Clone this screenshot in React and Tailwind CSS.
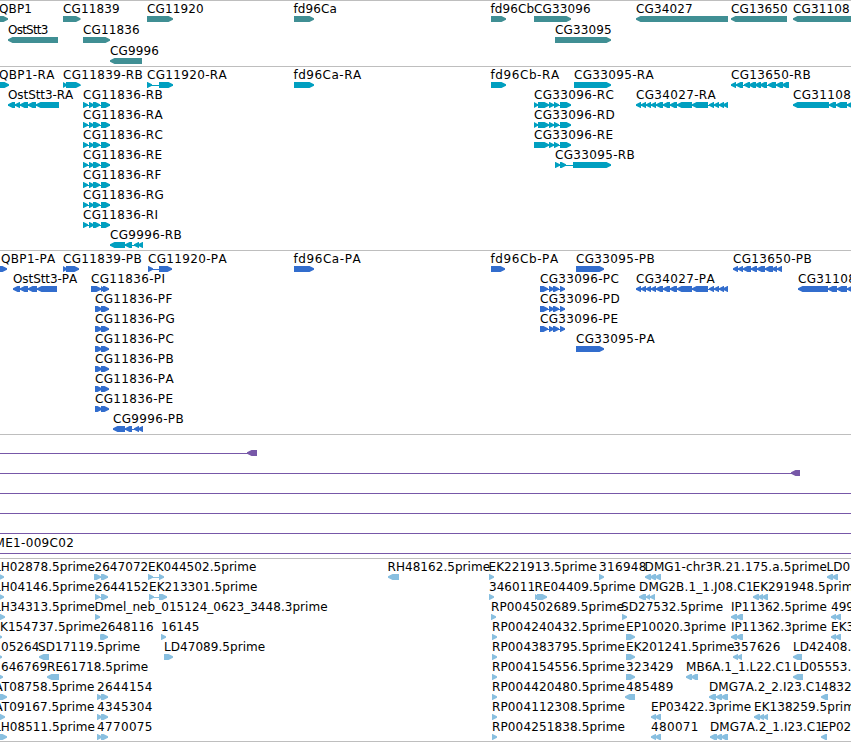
import React from 'react';

const WIDTH = 851;
const BAR_TOP = 16;
const BAR_HEIGHT = 6;
const MIDDLE = BAR_TOP + BAR_HEIGHT / 2;

// feature: [row, label, label x, strand, exons, label width (optional)]
const genes = [
  [0, 'QBP1', -1, 1, [[-12, 8]]],
  [0, 'CG11839', 63, 1, [[63, 80.5]]],
  [0, 'CG11920', 147, 1, [[147, 173]]],
  [0, 'fd96Ca', 293.5, 1, [[294, 314]], 43.5],
  [0, 'fd96Cb', 490.5, 1, [[491, 506]]],
  [0, 'CG33096', 534, 1, [[534, 571]]],
  [0, 'CG34027', 636, -1, [[636, 728]]],
  [0, 'CG13650', 731, -1, [[731, 787]]],
  [0, 'CG31108', 793, -1, [[793, 860]]],
  [1, 'OstStt3', 8, -1, [[8, 58]], 40.5],
  [1, 'CG11836', 83, 1, [[83, 110]]],
  [1, 'CG33095', 555, 1, [[555, 611]]],
  [2, 'CG9996', 110, -1, [[110, 142]]],
];

const cg11836R = [[83, 88], [89, 94], [93, 100], [101, 110]];
const cg33096R = [[534, 538], [538, 549], [549, 554], [554, 559], [560, 571]];
const cg34027 = [
  [636, 641], [641, 646], [646, 651], [651, 656], [656, 663], [663, 670], [670, 677],
  [677, 692], [692, 708], [709, 714], [714, 719], [719, 724], [723, 728],
];

const transcripts = [
  [0, 'QBP1-RA', -1, 1, [[-12, 9]]],
  [0, 'CG11839-RB', 63, 1, [[63, 67], [66, 80.5]]],
  [0, 'CG11920-RA', 147, 1, [[147, 152], [159, 173]]],
  [0, 'fd96Ca-RA', 293.5, 1, [[294, 314]], 68],
  [0, 'fd96Cb-RA', 490.5, 1, [[491, 506]], 69],
  [0, 'CG33095-RA', 574, 1, [[574, 611]]],
  [0, 'CG13650-RB', 731, -1, [[731, 736], [736, 743], [744, 750], [749, 756], [755, 761], [760, 767], [768, 776], [776, 783], [782, 789]]],
  [1, 'OstStt3-RA', 8, -1, [[8, 15], [15, 20], [20, 28], [28, 36], [36, 59]], 65.5],
  [1, 'CG11836-RB', 83, 1, cg11836R],
  [1, 'CG33096-RC', 534, 1, cg33096R],
  [1, 'CG34027-RA', 636, -1, cg34027],
  [1, 'CG31108', 793, -1, [[793, 829], [829, 836], [836, 847], [847, 860]]],
  [2, 'CG11836-RA', 83, 1, cg11836R],
  [2, 'CG33096-RD', 534, 1, cg33096R],
  [3, 'CG11836-RC', 83, 1, cg11836R],
  [3, 'CG33096-RE', 534, 1, [[534, 549], [549, 554], [554, 559], [560, 571]]],
  [4, 'CG11836-RE', 83, 1, cg11836R],
  [4, 'CG33095-RB', 555, 1, [[555, 560], [560, 566], [573, 611]]],
  [5, 'CG11836-RF', 83, 1, cg11836R],
  [6, 'CG11836-RG', 83, 1, cg11836R],
  [7, 'CG11836-RI', 83, 1, cg11836R],
  [8, 'CG9996-RB', 110, -1, [[110, 125], [125, 132], [134, 139], [138, 143]]],
];

const cg11836P = [[95, 102], [101, 109]];
const cg33096P = [[540, 548], [549, 554], [553, 559], [560, 565]];

const proteins = [
  [0, 'QBP1-PA', 1, 1, [[-12, 7]]],
  [0, 'CG11839-PB', 63, 1, [[63, 67], [66, 79]]],
  [0, 'CG11920-PA', 148, 1, [[148, 153], [159, 172]]],
  [0, 'fd96Ca-PA', 293.5, 1, [[294, 314]], 67.5],
  [0, 'fd96Cb-PA', 490.5, 1, [[491, 505]], 68],
  [0, 'CG33095-PB', 576, 1, [[576, 604]]],
  [0, 'CG13650-PB', 733, -1, [[733, 738], [738, 743], [743, 751], [751, 757], [757, 765], [765, 773], [772, 777], [777, 782]]],
  [1, 'OstStt3-PA', 13, -1, [[13, 20], [20, 28], [28, 37], [37, 57]], 64.5],
  [1, 'CG11836-PI', 91, 1, [[91, 101], [101, 105], [103, 109]]],
  [1, 'CG33096-PC', 540, 1, cg33096P],
  [1, 'CG34027-PA', 636, -1, cg34027],
  [1, 'CG31108', 798, -1, [[798, 828], [828, 837], [837, 847], [847, 860]]],
  [2, 'CG11836-PF', 95, 1, cg11836P],
  [2, 'CG33096-PD', 540, 1, cg33096P],
  [3, 'CG11836-PG', 95, 1, cg11836P],
  [3, 'CG33096-PE', 540, 1, cg33096P],
  [4, 'CG11836-PC', 95, 1, cg11836P],
  [4, 'CG33095-PA', 576, 1, [[576, 604]]],
  [5, 'CG11836-PB', 95, 1, cg11836P],
  [6, 'CG11836-PA', 95, 1, cg11836P],
  [7, 'CG11836-PE', 95, 1, cg11836P],
  [8, 'CG9996-PB', 113, -1, [[113, 125], [125, 132], [134, 139], [138, 143]]],
];

const clones = [
  [0, '', 0, -1, [[-20, -10], [247, 257]]],
  [1, '', 0, -1, [[-20, -10], [791, 800]]],
  [2, '', 0, -1, [[-20, -10], [860, 870]]],
  [3, '', 0, -1, [[-20, -10], [860, 870]]],
  [4, '', 0, -1, [[-20, -10], [860, 870]]],
  [5, 'ME1-009C02', -5.5, -1, [[-20, -10], [860, 870]], 79.5],
];

const ests = [
  [0, 'LH02878.5prime', -6, 1, [[-10, 4]]],
  [0, '2647072', 94.5, 1, [[94, 101], [101, 108]]],
  [0, 'EK044502.5prime', 148, 1, [[148, 153], [159, 164]]],
  [0, 'RH48162.5prime', 387.5, -1, [[388, 399]]],
  [0, 'EK221913.5prime', 488.5, 1, [[489, 494]]],
  [0, '316948', 599, 1, [[599, 604]], 47.5],
  [0, 'DMG1-chr3R.21.175.a.5prime', 644.5, -1, [[645, 651], [650, 656], [655, 661]], 182.5],
  [0, 'LD0', 826.5, -1, [[827, 833], [832, 838]]],
  [1, 'LH04146.5prime', -6, 1, [[-10, 4]]],
  [1, '2644152', 95, 1, [[95, 100], [101, 108]]],
  [1, 'EK213301.5prime', 149, 1, [[149, 154], [159, 167]]],
  [1, '346011', 489, 1, [[489, 494]]],
  [1, 'RE04409.5prime', 534.5, 1, [[535, 539], [537, 547]]],
  [1, 'DMG2B.1_1.J08.C1', 639, -1, [[639, 646], [646, 650], [650, 655]], 114.5],
  [1, 'EK291948.5prime', 752.5, -1, [[753, 759], [758, 763], [762, 768]]],
  [2, 'LH34313.5prime', -6, 1, [[-10, 5]]],
  [2, 'Dmel_neb_015124_0623_3448.3prime', 94.5, 1, [[95, 100]]],
  [2, 'RP004502689.5prime', 491, 1, [[491, 496]], 133],
  [2, 'SD27532.5prime', 621, 1, [[622, 627]]],
  [2, 'IP11362.5prime', 731, -1, [[731, 737], [736, 743]], 96],
  [2, '499', 831, -1, [[831, 836], [835, 841]]],
  [3, 'K154737.5prime', 0, 1, [[-10, 2]]],
  [3, '2648116', 100, 1, [[100, 104], [101, 108]]],
  [3, '16145', 161, 1, [[161, 166]]],
  [3, 'RP004240432.5prime', 492, 1, [[492, 497]], 133],
  [3, 'EP10020.3prime', 626, 1, [[626, 635]]],
  [3, 'IP11362.3prime', 731, -1, [[731, 737], [736, 743]], 96],
  [3, 'EK3', 831, -1, [[831, 836], [835, 841]]],
  [4, '05264', 1, 1, [[-10, 2]]],
  [4, 'SD17119.5prime', 38, -1, [[39, 49]]],
  [4, 'LD47089.5prime', 164, 1, [[164, 173]]],
  [4, 'RP004383795.5prime', 492, 1, [[492, 497]], 133],
  [4, 'EK201241.5prime', 626, 1, [[626, 635]]],
  [4, '357626', 733, -1, [[733, 738], [737, 742]], 47.5],
  [4, 'LD42408.', 793, -1, [[793, 802]]],
  [5, '646769', 1, 1, [[-10, 3]]],
  [5, 'RE61718.5prime', 47, -1, [[47, 59]]],
  [5, 'RP004154556.5prime', 492, 1, [[492, 497]], 133],
  [5, '323429', 626, 1, [[626, 635]], 47.5],
  [5, 'MB6A.1_1.L22.C1', 686, -1, [[686, 692], [691, 698]]],
  [5, 'LD05553.', 793, -1, [[793, 803]]],
  [6, 'AT08758.5prime', -5.5, 1, [[-10, 7]]],
  [6, '2644154', 97, 1, [[97, 102], [101, 108]], 55.5],
  [6, 'RP004420480.5prime', 492, 1, [[492, 497]], 133],
  [6, '485489', 626, -1, [[625, 635]], 47.5],
  [6, 'DMG7A.2_2.I23.C1', 709, -1, [[709, 716], [716, 722], [721, 728]]],
  [6, '4832', 821, -1, [[821, 828]]],
  [7, 'AT09167.5prime', -5.5, 1, [[-10, 5]]],
  [7, '4345304', 97, 1, [[97, 102], [101, 108]], 55.5],
  [7, 'RP004112308.5prime', 492, 1, [[492, 497]], 133],
  [7, 'EP03422.3prime', 651, -1, [[651, 656], [655, 661]]],
  [7, 'EK138259.5prime', 754, -1, [[754, 760], [759, 764], [763, 768]]],
  [8, 'LH08511.5prime', -6, 1, [[-10, 7]]],
  [8, '4770075', 97, 1, [[97, 102], [101, 108]], 55.5],
  [8, 'RP004251838.5prime', 492, 1, [[492, 497]], 133],
  [8, '480071', 651, -1, [[651, 656], [655, 661]], 47.5],
  [8, 'DMG7A.2_1.I23.C1', 710, -1, [[710, 717], [716, 722], [721, 728]]],
  [8, 'EP02', 821, -1, [[821, 827]]],
];

// block with a blunt point on the side it is read towards
function exonPoints([from, to], strand, top) {
  const head = Math.min(4.5, to - from);
  const bottom = top + BAR_HEIGHT;
  const mid = top + BAR_HEIGHT / 2;
  const back = strand > 0 ? from : to;
  const tip = strand > 0 ? to : from;
  const neck = strand > 0 ? to - head : from + head;
  return [
    [back, top], [neck, top], [tip, mid - 0.8],
    [tip, mid + 0.8], [neck, bottom], [back, bottom],
  ].map((p) => p.join(',')).join(' ');
}

function Feature({ feature, rowHeight }) {
  const [row, label, x, strand, exons, labelWidth] = feature;
  const y = row * rowHeight;
  const start = exons[0][0];
  const end = exons[exons.length - 1][1];
  return (
    <g>
      {exons.length > 1 && <rect x={start} y={y + MIDDLE} width={end - start} height="1" />}
      {exons.map((exon) => (
        <polygon key={exon[0]} points={exonPoints(exon, strand, y + BAR_TOP)} />
      ))}
      {label && <text x={x} y={y + 13} textLength={labelWidth} className="fill-black">{label}</text>}
    </g>
  );
}

function Track({ features, rowHeight = 20, className }) {
  return (
    <section className={`border-t border-[#bebebe] ${className}`}>
      <svg width={WIDTH} height="100%" className="block -mt-px overflow-hidden">
        {features.map((f) => (
          <Feature key={`${f[0]}-${f[1]}-${f[2]}`} feature={f} rowHeight={rowHeight} />
        ))}
      </svg>
    </section>
  );
}

function App() {
  return (
    <main className="flex w-[851px] flex-col overflow-hidden border-b border-[#bebebe] bg-white font-['DejaVu_Sans',sans-serif] text-[12px]">
      <Track features={genes} rowHeight={21} className="h-[66px] fill-[#408f94] tracking-[0.12px]" />
      <Track features={transcripts} className="h-[184px] fill-[#009fc0] tracking-[0.33px] [font-kerning:none]" />
      <Track features={proteins} className="h-[184px] fill-[#326dcd] tracking-[0.33px] [font-kerning:none]" />
      <Track features={clones} className="h-[124px] fill-[#7758a8] tracking-[0.12px]" />
      <Track features={ests} className="h-[183px] fill-[#88bfe0] tracking-[0.05px]" />
    </main>
  );
}

export default App;
